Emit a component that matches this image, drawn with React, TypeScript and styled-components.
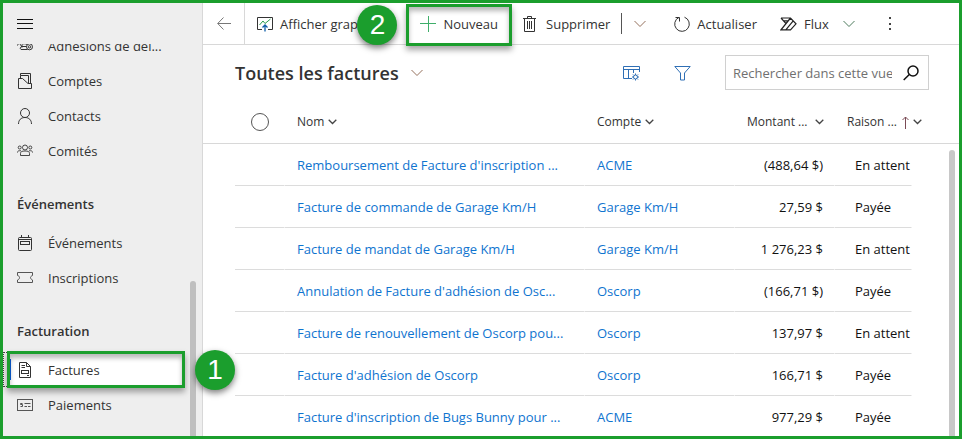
import React from "react";
import styled, { createGlobalStyle, css } from "styled-components";

const GREEN = "#1b9e2d";
const LINE = "#d8d8d8";

const GlobalStyle = createGlobalStyle`
  *, *::before, *::after { box-sizing: border-box; }
  body {
    margin: 0;
    font-family: "Open Sans", "Noto Sans", sans-serif;
    font-size: 13px;
    line-height: 20px;
    color: #333;
    background: #fff;
  }
  button { font: inherit; color: inherit; background: none; border: 0; padding: 0; cursor: pointer; }
  a { text-decoration: none; }
  svg { display: block; flex: none; }
`;

const Frame = styled.div`
  display: flex;
  height: 100vh;
  border: 3px solid ${GREEN};
  overflow: hidden;
`;

/* ---- annotations ---- */

const calloutBox = css`
  content: "";
  position: absolute;
  border: 3px solid ${GREEN};
  box-shadow: 0 4px 6px rgba(0, 0, 0, 0.35), inset 0 4px 5px rgba(0, 0, 0, 0.28);
  pointer-events: none;
`;

const Badge = styled.span`
  position: absolute;
  z-index: 3;
  width: 40px;
  height: 40px;
  border-radius: 50%;
  background: ${GREEN};
  color: #fff;
  font-family: "Liberation Sans", sans-serif;
  font-size: 28px;
  line-height: 40px;
  text-align: center;
  box-shadow: 0 3px 6px rgba(0, 0, 0, 0.5);
`;

/* ---- sidebar ---- */

const Sidebar = styled.aside`
  display: flex;
  flex-direction: column;
  flex: none;
  width: 200px;
  background: #eee;
  border-right: 1px solid ${LINE};
`;

const MenuButton = styled.button`
  display: flex;
  align-items: center;
  flex: none;
  height: 41px;
  padding: 0 14px;
`;

const NavScroll = styled.div`
  position: relative;
  flex: 1;
  min-height: 0;
  overflow-x: visible;
  overflow-y: clip;
`;

const Nav = styled.nav`
  margin-top: -16px;
`;

const NavList = styled.ul`
  list-style: none;
  margin: 0;
  padding: 0;
`;

const NavItem = styled.li`
  position: relative;
`;

const NavBadge = styled(Badge)`
  left: 192px;
  top: -2px;
`;

const NavLink = styled.a<{ $active?: boolean }>`
  display: flex;
  align-items: center;
  gap: 15px;
  height: 35px;
  padding-left: 14px;
  color: #333;
  white-space: nowrap;
  ${(p) =>
    p.$active &&
    css`
      position: relative;
      margin: 0 17px 0 4px;
      padding-left: 10px;
      background: #fff;
      &::before {
        content: "";
        position: absolute;
        left: 3px;
        top: 7px;
        width: 1px;
        height: 21px;
        background: #0b5ed7;
      }
      &::after {
        ${calloutBox}
        inset: -1px 0;
      }
    `}
`;

const FocusMark = styled.span`
  position: absolute;
  left: 0;
  top: 0;
  width: 4px;
  height: 35px;
  border: 1px dotted #444;
  border-right: 0;
`;

const GroupTitle = styled.h2`
  margin: 0;
  padding: 26px 14px 11px;
  font-size: 13px;
  line-height: 20px;
  font-weight: 600;
`;

const Thumb = styled.div<{ $top: number; $right: number }>`
  position: absolute;
  top: ${(p) => p.$top}px;
  right: ${(p) => p.$right}px;
  bottom: 0;
  width: 6px;
  border-radius: 3px 3px 0 0;
  background: ${(p) => (p.$right > 4 ? "#bfbfbf" : "#c8c8c8")};
`;

/* ---- main area ---- */

const Main = styled.main`
  display: flex;
  flex-direction: column;
  flex: 1;
  min-width: 0;
`;

const Toolbar = styled.div`
  display: flex;
  flex: none;
  height: 42px;
  border-bottom: 1px solid ${LINE};
  white-space: nowrap;
`;

const BackButton = styled.button`
  display: flex;
  align-items: center;
  justify-content: center;
  width: 42px;
  border-right: 1px solid ${LINE};
`;

const Command = styled.button<{ $pad?: number }>`
  position: relative;
  display: flex;
  align-items: center;
  gap: 7px;
  padding: 0 ${(p) => p.$pad ?? 12}px;
`;

const ChartCommand = styled(Command)`
  padding-right: 14px;
`;

const Highlighted = styled(Command)`
  &::after {
    ${calloutBox}
    inset: 1px 0 -2px;
  }
`;

const ToolbarBadge = styled(Badge)`
  left: -49px;
  top: 2px;
`;

const Divider = styled.span`
  align-self: center;
  width: 1px;
  height: 21px;
  background: #555;
`;

const ViewBar = styled.div`
  display: flex;
  align-items: center;
  flex: none;
  height: 55px;
  padding: 0 30px 0 32px;
`;

const ViewTitle = styled.button`
  display: flex;
  align-items: center;
  gap: 12px;
  margin-right: auto;
`;

const Title = styled.h1`
  margin: 0;
  font-size: 18px;
  line-height: 28px;
  font-weight: 600;
  white-space: nowrap;
`;

const IconButton = styled.button`
  margin-right: 34px;
`;

const SearchBox = styled.form`
  display: flex;
  align-items: center;
  width: 204px;
  height: 35px;
  padding: 0 9px 0 7px;
  border: 1px solid #d0d0d0;
`;

const SearchInput = styled.input`
  flex: 1;
  min-width: 0;
  padding: 0;
  border: 0;
  outline: 0;
  font: inherit;
  color: #333;
  &::placeholder {
    color: #707070;
    opacity: 1;
  }
`;

const SearchButton = styled.button`
  margin-left: 11px;
`;

const GridArea = styled.div`
  position: relative;
  flex: 1;
  min-height: 0;
  overflow: hidden;
`;

const Table = styled.table`
  width: 100%;
  table-layout: fixed;
  border-collapse: separate;
  border-spacing: 0;
`;

const Col = styled.col<{ $w?: number }>`
  width: ${(p) => (p.$w ? `${p.$w}px` : "auto")};
`;

const HeadCell = styled.th<{ $left?: number }>`
  height: 44px;
  padding: 1px 0 0 ${(p) => p.$left ?? 0}px;
  border-bottom: 1px solid ${LINE};
  font-size: 12px;
  font-weight: 500;
  text-align: left;
  white-space: nowrap;
`;

const HeadButton = styled.button<{ $wide?: boolean }>`
  display: flex;
  align-items: center;
  gap: ${(p) => (p.$wide ? 7 : 4)}px;
`;

const SelectAll = styled.input`
  appearance: none;
  display: block;
  width: 18px;
  height: 18px;
  margin: 0 0 0 16px;
  border: 1px solid #555;
  border-radius: 50%;
`;

const Cell = styled.td<{ $left?: number; $right?: boolean; $bare?: boolean }>`
  height: 42px;
  padding: 0 ${(p) => (p.$right ? 11 : 0)}px 0 ${(p) => p.$left ?? 0}px;
  border-bottom: ${(p) => (p.$bare ? "0" : "1px solid #dcdcdc")};
  border-right: ${(p) => (p.$bare ? "0" : "1px solid #fff")};
  color: #111;
  text-align: ${(p) => (p.$right ? "right" : "left")};
  white-space: nowrap;
  overflow: hidden;
`;

const RecordLink = styled.a`
  color: #0f74cf;
`;

/* ---- icons ---- */

type IconProps = { children: React.ReactNode; w?: number; h?: number; color?: string; sw?: number };
const Icon = ({ children, w = 16, h = 16, color = "#333", sw = 1 }: IconProps) => (
  <svg width={w} height={h} viewBox={`0 0 ${w} ${h}`} fill="none" stroke={color} strokeWidth={sw} aria-hidden="true">
    {children}
  </svg>
);

const ChevronThin = ({ color = "#555" }: { color?: string }) => (
  <Icon w={12} h={8} color={color}>
    <path d="M0.5 1L6 6.5L11.5 1" />
  </Icon>
);

const ChevronSmall = () => (
  <Icon w={9} h={6} color="#444" sw={1.3}>
    <path d="M0.7 0.8L4.5 4.5L8.3 0.8" />
  </Icon>
);

const icons = {
  menu: (
    <Icon color="#111">
      <path d="M0 3.5H16M0 7.5H16M0 12.5H16" />
    </Icon>
  ),
  delegate: (
    <Icon>
      <path d="M0.5 7.5C1 5 3 5 3.8 7.2L5 9.5M4 11.5C2.5 11 3.5 8.5 5 8.5V6.5C5 5.500 9 5.500 10 6.500M5 8.500H9.500M4 11.500H10.500" />
      <circle cx="12.5" cy="8.8" r="3" />
      <circle cx="12.5" cy="8.8" r="1.2" />
    </Icon>
  ),
  accounts: (
    <Icon>
      <path d="M1.5 5.5V15.5H14.5V10.5H11L5.5 5.5H1.5M3.5 5.5V2.5H11.5M11.5 10V2.5M3.5 2.5V0.5H13.5V10.5" />
    </Icon>
  ),
  contact: (
    <Icon>
      <circle cx="8" cy="5" r="4.5" />
      <path d="M1.5 16C1.5 12 4 9.500 8 9.500S14.500 12 14.500 16" />
    </Icon>
  ),
  committee: (
    <Icon sw={0.9}>
      <circle cx="8" cy="4.5" r="2.5" />
      <circle cx="2.7" cy="4.5" r="1.5" />
      <circle cx="13.3" cy="4.5" r="1.5" />
      <path d="M3.5 12.5V10.5C3.5 8.5 5 8 8 8S12.5 8.5 12.5 10.5V12.5ZM0.5 9.5C0.5 8 1.5 7.5 4 7.8M15.5 9.5C15.5 8 14.5 7.5 12 7.8" />
    </Icon>
  ),
  calendar: (
    <Icon>
      <rect x="1.5" y="2.5" width="13" height="13" rx="1" />
      <path d="M1.5 4.5H14.5M4.5 0V3M11.5 0V3" />
      <rect x="3.5" y="6.5" width="9" height="3" />
    </Icon>
  ),
  ticket: (
    <Icon color="#555">
      <path d="M0.5 2.500H15.500V5.500C14 6 13.500 7 13.500 7.500S14 9.500 15.500 10V12.500H0.500V10C2 9.500 2.500 8.500 2.500 7.500S2 6 0.500 5.500Z" />
    </Icon>
  ),
  invoice: (
    <Icon>
      <path d="M2.5 0.5H9.5L13.5 4.5V15.5H2.5ZM9.5 0.5V4.5H13.5M4.5 3.5H8M4.5 5.5H8M10 13.5H12" />
      <rect x="4.5" y="8.5" width="7" height="3" />
    </Icon>
  ),
  payment: (
    <Icon color="#555">
      <rect x="0.5" y="2.5" width="15" height="11" />
      <path d="M5.500 6.500H3.500V7.500H5.500V9.500H3.500M7.500 6.500H13.500M7.500 9.500H10M11 9.500H13.500" />
    </Icon>
  ),
  back: (
    <Icon w={14} h={14} color="#777">
      <path d="M14 6.500H0.800M6.500 0.500L0.700 6.500L6.500 12.500" />
    </Icon>
  ),
  chart: (
    <Icon>
      <path d="M5 13.5H0.5V1.5H15.5V13.5H11" />
      <path stroke="#2b9e4b" d="M2.5 9L6 5L8 7.5L13.5 3" />
      <path stroke="#0f5ea8" strokeWidth="1.3" d="M8 15.5V9M5.5 11.5L8 9L10.5 11.5" />
    </Icon>
  ),
  plus: (
    <Icon color="#3fae6a">
      <path d="M0 7.500H16M8.500 0V16" />
    </Icon>
  ),
  trash: (
    <Icon>
      <path d="M1.5 2.5V15.5H11.5V2.5M0 2.5H13M4.5 2.5V0.5H8.5V2.5M4.5 5V13M6.5 5V13M8.5 5V13" />
    </Icon>
  ),
  refresh: (
    <Icon>
      <path d="M10.500 1.200A7.300 7.300 0 1 1 5 1.400M1.500 1.500H5.500V5.500" />
    </Icon>
  ),
  flow: (
    <Icon w={17} h={14} color="#222" sw={1.2}>
      <path d="M1 1H10.5L16 6.8L10.5 12.8H1L10.5 1M1 1L6 6.6M3.500 3.800H8M13.200 3.800L5.800 12.800" />
    </Icon>
  ),
  more: (
    <svg width="4" height="16" viewBox="0 0 4 16" fill="#444" aria-hidden="true">
      <rect x="1" y="1" width="2" height="2" />
      <rect x="1" y="7" width="2" height="2" />
      <rect x="1" y="12" width="2" height="2" />
    </svg>
  ),
  columns: (
    <Icon w={17} color="#2f6fb5">
      <path d="M9 13.5H0.5V1.5H16.5V7M0.5 4.5H16.5M5.5 4.5V13.5M10.5 4.5V8" />
      <circle cx="12.5" cy="12" r="2" />
      <path d="M12.5 8.5V10M12.5 14V15.5M9 12H10.5M14.5 12H16M10 9.5L11 10.5M14 13.5L15 14.5M15 9.5L14 10.5M11 13.5L10 14.5" />
    </Icon>
  ),
  filter: (
    <Icon w={17} color="#2f6fb5">
      <path d="M0.8 1.5H16.2L10.5 8V15H6.5V8Z" />
    </Icon>
  ),
  search: (
    <Icon color="#111" sw={1.5}>
      <circle cx="10" cy="6" r="5" />
      <path d="M6.3 9.5L0.7 15" />
    </Icon>
  ),
  sortUp: (
    <Icon w={8} h={13} color="#7a4a55">
      <path d="M4.5 13V1M1.5 4L4.5 1L7.5 4" />
    </Icon>
  ),
};

/* ---- data ---- */

type NavEntry = { label: string; icon: React.ReactNode; active?: boolean };
const groups: { title?: string; items: NavEntry[] }[] = [
  {
    items: [
      { label: "Adhésions de dél...", icon: icons.delegate },
      { label: "Comptes", icon: icons.accounts },
      { label: "Contacts", icon: icons.contact },
      { label: "Comités", icon: icons.committee },
    ],
  },
  {
    title: "Événements",
    items: [
      { label: "Événements", icon: icons.calendar },
      { label: "Inscriptions", icon: icons.ticket },
    ],
  },
  {
    title: "Facturation",
    items: [
      { label: "Factures", icon: icons.invoice, active: true },
      { label: "Paiements", icon: icons.payment },
    ],
  },
];

const invoices = [
  ["Remboursement de Facture d'inscription ...", "ACME", "(488,64 $)", "En attent"],
  ["Facture de commande de Garage Km/H", "Garage Km/H", "27,59 $", "Payée"],
  ["Facture de mandat de Garage Km/H", "Garage Km/H", "1 276,23 $", "En attent"],
  ["Annulation de Facture d'adhésion de Osc...", "Oscorp", "(166,71 $)", "Payée"],
  ["Facture de renouvellement de Oscorp pou...", "Oscorp", "137,97 $", "En attent"],
  ["Facture d'adhésion de Oscorp", "Oscorp", "166,71 $", "Payée"],
  ["Facture d'inscription de Bugs Bunny pour ...", "ACME", "977,29 $", "Payée"],
];

export default function App() {
  return (
    <>
      <GlobalStyle />
      <Frame>
        <Sidebar>
          <MenuButton aria-label="Menu">{icons.menu}</MenuButton>
          <NavScroll>
            <Nav>
              {groups.map((group, g) => (
                <section key={g}>
                  {group.title && <GroupTitle>{group.title}</GroupTitle>}
                  <NavList>
                    {group.items.map((item) => (
                      <NavItem key={item.label}>
                        {item.active && <FocusMark />}
                        <NavLink href="#" $active={item.active}>
                          {item.icon}
                          {item.label}
                        </NavLink>
                        {item.active && <NavBadge>1</NavBadge>}
                      </NavItem>
                    ))}
                  </NavList>
                </section>
              ))}
            </Nav>
            <Thumb $top={237} $right={6} />
          </NavScroll>
        </Sidebar>

        <Main>
          <Toolbar role="toolbar">
            <BackButton aria-label="Retour">{icons.back}</BackButton>
            <ChartCommand>
              {icons.chart}
              Afficher graphique
            </ChartCommand>
            <Highlighted $pad={14}>
              {icons.plus}
              Nouveau
              <ToolbarBadge>2</ToolbarBadge>
            </Highlighted>
            <Command $pad={11}>
              {icons.trash}
              Supprimer
            </Command>
            <Divider />
            <Command aria-label="Autres suppressions">
              <ChevronThin color="#94705c" />
            </Command>
            <Command $pad={16}>
              {icons.refresh}
              Actualiser
            </Command>
            <Command $pad={7}>
              {icons.flow}
              Flux
            </Command>
            <Command $pad={7} aria-label="Options de flux">
              <ChevronThin color="#4c7a5c" />
            </Command>
            <Command $pad={26} aria-label="Plus de commandes">
              {icons.more}
            </Command>
          </Toolbar>

          <ViewBar>
            <ViewTitle>
              <Title>Toutes les factures</Title>
              <ChevronThin color="#94705c" />
            </ViewTitle>
            <IconButton aria-label="Modifier les colonnes">{icons.columns}</IconButton>
            <IconButton aria-label="Filtrer">{icons.filter}</IconButton>
            <SearchBox role="search">
              <SearchInput aria-label="Rechercher dans cette vue" placeholder="Rechercher dans cette vue" />
              <SearchButton type="button" aria-label="Rechercher">
                {icons.search}
              </SearchButton>
            </SearchBox>
          </ViewBar>

          <GridArea>
            <Table>
              <colgroup>
                <Col $w={32} />
                <Col $w={50} />
                <Col />
                <Col $w={150} />
                <Col $w={100} />
                <Col $w={77} />
                <Col $w={47} />
              </colgroup>
              <thead>
                <tr>
                  <HeadCell />
                  <HeadCell>
                    <SelectAll type="checkbox" aria-label="Tout sélectionner" />
                  </HeadCell>
                  <HeadCell $left={12}>
                    <HeadButton>
                      Nom <ChevronSmall />
                    </HeadButton>
                  </HeadCell>
                  <HeadCell $left={12}>
                    <HeadButton>
                      Compte <ChevronSmall />
                    </HeadButton>
                  </HeadCell>
                  <HeadCell $left={12}>
                    <HeadButton $wide>
                      Montant ... <ChevronSmall />
                    </HeadButton>
                  </HeadCell>
                  <HeadCell $left={12} colSpan={2}>
                    <HeadButton>
                      Raison ... {icons.sortUp} <ChevronSmall />
                    </HeadButton>
                  </HeadCell>
                </tr>
              </thead>
              <tbody>
                {invoices.map(([name, account, amount, status]) => (
                  <tr key={name}>
                    <Cell $bare />
                    <Cell />
                    <Cell $left={12}>
                      <RecordLink href="#">{name}</RecordLink>
                    </Cell>
                    <Cell $left={12}>
                      <RecordLink href="#">{account}</RecordLink>
                    </Cell>
                    <Cell $right>{amount}</Cell>
                    <Cell $left={20}>{status}</Cell>
                    <Cell $bare />
                  </tr>
                ))}
              </tbody>
            </Table>
            <Thumb $top={50} $right={4} />
          </GridArea>
        </Main>
      </Frame>
    </>
  );
}
